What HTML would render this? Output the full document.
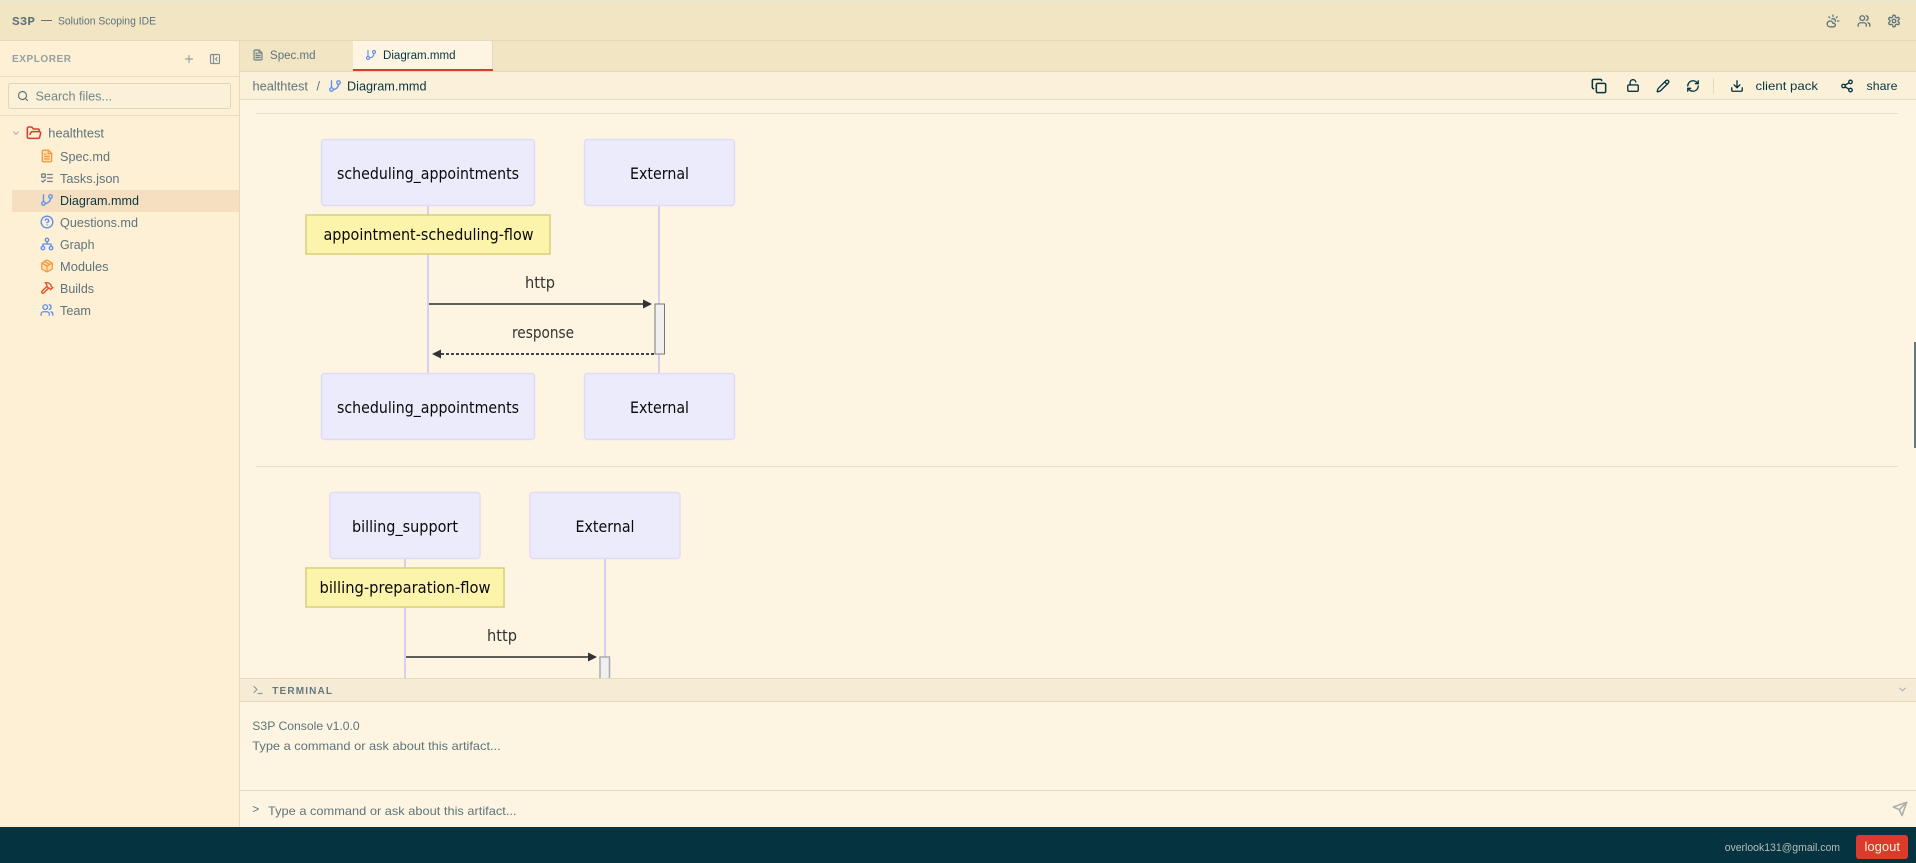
<!DOCTYPE html>
<html lang="en"><head><meta charset="utf-8"><title>S3P Solution Scoping IDE</title>
<style>
html,body{margin:0;padding:0;width:1916px;height:863px;overflow:hidden;background:#fdf5e2}
svg{display:block}
.i{font-family:"Liberation Sans",sans-serif}
.m{font-family:"DejaVu Sans",sans-serif;font-size:16px;fill:#0a0a0a;text-anchor:middle}
.ic{fill:none;stroke:currentColor;stroke-width:2.3;stroke-linecap:round;stroke-linejoin:round}
.t{font-size:12.5px;fill:#5f747a}
</style></head><body>
<svg width="1916" height="863" viewBox="0 0 1916 863" xmlns="http://www.w3.org/2000/svg">
<defs>
<symbol id="file" viewBox="0 0 24 24"><g class="ic"><path d="M14.5 2H6a2 2 0 0 0-2 2v16a2 2 0 0 0 2 2h12a2 2 0 0 0 2-2V7.5L14.5 2z" fill-opacity=".18" style="fill:currentColor"/><path d="M14 2v6h6M16 13H8M16 17H8M10 9H8"/></g></symbol>
<symbol id="todo" viewBox="0 0 24 24"><g class="ic"><rect x="3" y="5" width="6" height="6" rx="1"/><path d="m3 17 2 2 4-4M13 6h8M13 12h8M13 18h8"/></g></symbol>
<symbol id="branch" viewBox="0 0 24 24"><g class="ic"><path d="M6 3v12"/><circle cx="18" cy="6" r="3"/><circle cx="6" cy="18" r="3"/><path d="M18 9a9 9 0 0 1-9 9"/></g></symbol>
<symbol id="help" viewBox="0 0 24 24"><g class="ic"><circle cx="12" cy="12" r="10"/><path d="M9.09 9a3 3 0 0 1 5.83 1c0 2-3 3-3 3M12 17h.01"/></g></symbol>
<symbol id="graph" viewBox="0 0 24 24"><g class="ic"><circle cx="12" cy="5" r="3"/><circle cx="5" cy="19" r="3"/><circle cx="19" cy="19" r="3"/><path d="M5 16v-3a1 1 0 0 1 1-1h12a1 1 0 0 1 1 1v3M12 12V8"/></g></symbol>
<symbol id="pkg" viewBox="0 0 24 24"><g class="ic"><path d="M16.5 9.4 7.5 4.21"/><path d="M21 16V8a2 2 0 0 0-1-1.73l-7-4a2 2 0 0 0-2 0l-7 4A2 2 0 0 0 3 8v8a2 2 0 0 0 1 1.73l7 4a2 2 0 0 0 2 0l7-4A2 2 0 0 0 21 16z" fill-opacity=".15" style="fill:currentColor"/><path d="M3.27 6.96 12 12.01l8.73-5.05M12 22.08V12"/></g></symbol>
<symbol id="hammer" viewBox="0 0 24 24"><g class="ic"><path d="m15 12-8.373 8.373a1 1 0 1 1-3-3L12 9"/><path d="m18 15 4-4"/><path d="m21.5 11.5-1.914-1.914A2 2 0 0 1 19 8.172V7l-2.26-2.26a6 6 0 0 0-4.202-1.756L9 2.96l.92.82A6.18 6.18 0 0 1 12 8.4V10l2 2h1.172a2 2 0 0 1 1.414.586L18.5 14.5"/></g></symbol>
<symbol id="users" viewBox="0 0 24 24"><g class="ic"><path d="M16 21v-2a4 4 0 0 0-4-4H6a4 4 0 0 0-4 4v2"/><circle cx="9" cy="7" r="4"/><path d="M22 21v-2a4 4 0 0 0-3-3.87M16 3.13a4 4 0 0 1 0 7.75"/></g></symbol>
<symbol id="folder" viewBox="0 0 24 24"><g class="ic"><path d="m6 14 1.5-2.9A2 2 0 0 1 9.24 10H20a2 2 0 0 1 1.94 2.5l-1.54 6a2 2 0 0 1-1.95 1.5H4a2 2 0 0 1-2-2V5a2 2 0 0 1 2-2h3.9a2 2 0 0 1 1.69.9l.81 1.2a2 2 0 0 0 1.67.9H18a2 2 0 0 1 2 2v2"/></g></symbol>
<symbol id="copy" viewBox="0 0 24 24"><g class="ic"><rect x="8" y="8" width="14" height="14" rx="2"/><path d="M4 16c-1.1 0-2-.9-2-2V4c0-1.1.9-2 2-2h10c1.1 0 2 .9 2 2"/></g></symbol>
<symbol id="lock" viewBox="0 0 24 24"><g class="ic"><rect x="3" y="11" width="18" height="11" rx="2"/><path d="M7 11V7a5 5 0 0 1 9.9-1"/></g></symbol>
<symbol id="pencil" viewBox="0 0 24 24"><g class="ic"><path d="M21.174 6.812a1 1 0 0 0-3.986-3.987L3.842 16.174a2 2 0 0 0-.5.83l-1.321 4.352a.5.5 0 0 0 .623.622l4.353-1.32a2 2 0 0 0 .83-.497z"/><path d="m15 5 4 4"/></g></symbol>
<symbol id="refresh" viewBox="0 0 24 24"><g class="ic"><path d="M3 12a9 9 0 0 1 9-9 9.75 9.75 0 0 1 6.74 2.74L21 8"/><path d="M21 3v5h-5"/><path d="M21 12a9 9 0 0 1-9 9 9.75 9.75 0 0 1-6.74-2.74L3 16"/><path d="M8 16H3v5"/></g></symbol>
<symbol id="down" viewBox="0 0 24 24"><g class="ic"><path d="M3 15v4a2 2 0 0 0 2 2h14a2 2 0 0 0 2-2v-4M7 10l5 5 5-5M12 15V3"/></g></symbol>
<symbol id="share" viewBox="0 0 24 24"><g class="ic"><circle cx="18" cy="5" r="3"/><circle cx="6" cy="12" r="3"/><circle cx="18" cy="19" r="3"/><path d="M8.59 13.51 15.42 17.49M15.41 6.51 8.59 10.49"/></g></symbol>
<symbol id="gear" viewBox="0 0 24 24"><g class="ic"><path d="M12.22 2h-.44a2 2 0 0 0-2 2v.18a2 2 0 0 1-1 1.73l-.43.25a2 2 0 0 1-2 0l-.15-.08a2 2 0 0 0-2.73.73l-.22.38a2 2 0 0 0 .73 2.73l.15.1a2 2 0 0 1 1 1.72v.51a2 2 0 0 1-1 1.74l-.15.09a2 2 0 0 0-.73 2.73l.22.38a2 2 0 0 0 2.73.73l.15-.08a2 2 0 0 1 2 0l.43.25a2 2 0 0 1 1 1.73V20a2 2 0 0 0 2 2h.44a2 2 0 0 0 2-2v-.18a2 2 0 0 1 1-1.73l.43-.25a2 2 0 0 1 2 0l.15.08a2 2 0 0 0 2.73-.73l.22-.39a2 2 0 0 0-.73-2.73l-.15-.08a2 2 0 0 1-1-1.74v-.5a2 2 0 0 1 1-1.74l.15-.09a2 2 0 0 0 .73-2.73l-.22-.38a2 2 0 0 0-2.73-.73l-.15.08a2 2 0 0 1-2 0l-.43-.25a2 2 0 0 1-1-1.73V4a2 2 0 0 0-2-2z"/><circle cx="12" cy="12" r="3"/></g></symbol>
<symbol id="cloud" viewBox="0 0 24 24"><g class="ic"><path d="M12 2v2M4.93 4.93l1.41 1.41M20 12h2M19.07 4.93l-1.41 1.41M15.947 12.65a4 4 0 0 0-5.925-4.128"/><path d="M13 22H7a5 5 0 1 1 4.9-6H13a3 3 0 0 1 0 6Z"/></g></symbol>
<symbol id="send" viewBox="0 0 24 24"><g class="ic"><path d="m22 2-7 20-4-9-9-4Z"/><path d="M22 2 11 13"/></g></symbol>
<symbol id="term" viewBox="0 0 24 24"><g class="ic"><path d="M4 17l6-6-6-6M12 19h8"/></g></symbol>
<symbol id="chev" viewBox="0 0 24 24"><g class="ic"><path d="m6 9 6 6 6-6"/></g></symbol>
<symbol id="plus" viewBox="0 0 24 24"><g class="ic"><path d="M5 12h14M12 5v14"/></g></symbol>
<symbol id="panel" viewBox="0 0 24 24"><g class="ic"><rect x="3" y="3" width="18" height="18" rx="2"/><path d="M9 3v18M16 15l-3-3 3-3"/></g></symbol>
<symbol id="search" viewBox="0 0 24 24"><g class="ic"><circle cx="11" cy="11" r="8"/><path d="m21 21-4.3-4.3"/></g></symbol>
<clipPath id="clip"><rect x="240" y="100" width="1676" height="578"/></clipPath>
</defs>

<!-- backgrounds -->
<rect width="1916" height="863" fill="#fdf5e2"/>
<rect width="1916" height="41" fill="#f1e5c4"/>
<rect width="1916" height="1" fill="#ece6d6"/>
<rect y="40" width="1916" height="1" fill="#e4dabc"/>
<rect y="41" width="240" height="786" fill="#fdf0d5"/>
<rect x="239" y="41" width="1" height="786" fill="#e4dabc"/>
<rect y="76" width="239" height="1" fill="#e6dcc0"/>
<rect y="115" width="239" height="1" fill="#e6dcc0"/>
<rect x="240" y="41" width="1676" height="30" fill="#f1e5c4"/>
<rect x="240" y="71" width="1676" height="1" fill="#e4dabc"/>
<rect x="240" y="72" width="1676" height="27" fill="#fbf1d9"/>
<rect x="240" y="99" width="1676" height="1" fill="#e6dcc0"/>

<!-- top bar -->
<text x="12" y="25" font-family="Liberation Mono, monospace" font-size="12" font-weight="700" fill="#5f747a" textLength="23" lengthAdjust="spacingAndGlyphs">S3P</text>
<rect x="41" y="20" width="11" height="1" fill="#5f747a"/>
<text class="i" x="58" y="24.500" font-size="11" fill="#5f747a" textLength="98" lengthAdjust="spacingAndGlyphs">Solution Scoping IDE</text>
<use href="#cloud" x="1826" y="14" width="14" height="14" color="#5f747a"/>
<use href="#users" x="1857" y="14" width="14" height="14" color="#5f747a"/>
<use href="#gear" x="1887" y="14" width="14" height="14" color="#5f747a"/>

<!-- explorer -->
<text class="i" x="12" y="62" font-size="10" font-weight="700" fill="#93a1a1" textLength="59" lengthAdjust="spacing">EXPLORER</text>
<use href="#plus" x="183" y="53" width="12" height="12" color="#93a1a1"/>
<use href="#panel" x="209" y="53" width="12" height="12" color="#7f9094"/>
<rect x="8.500" y="83.500" width="222" height="25" rx="2" fill="#fbf1d9" stroke="#e0d6b8"/>
<use href="#search" x="17" y="90" width="12" height="12" color="#5f747a"/>
<text class="i" x="35.500" y="100.500" font-size="12.500" fill="#74868a" textLength="76.500" lengthAdjust="spacingAndGlyphs">Search files...</text>

<use href="#chev" x="11" y="128" width="10" height="10" color="#a2aca8"/>
<use href="#folder" x="26" y="125" width="16" height="16" color="#dc3a2a"/>
<text class="i t" x="48.300" y="137.500" textLength="55.700" lengthAdjust="spacingAndGlyphs">healthtest</text>

<rect x="12" y="190" width="227" height="22" fill="#f5dfc0"/>
<use href="#file" x="40" y="149" width="14" height="14" color="#f89a3c"/>
<text class="i t" x="60" y="161" textLength="50" lengthAdjust="spacingAndGlyphs">Spec.md</text>
<use href="#todo" x="40" y="171" width="14" height="14" color="#6f8186"/>
<text class="i t" x="60" y="183" textLength="59.500" lengthAdjust="spacingAndGlyphs">Tasks.json</text>
<use href="#branch" x="40" y="193" width="14" height="14" color="#5f8ff0"/>
<text class="i t" x="60" y="205" textLength="79" lengthAdjust="spacingAndGlyphs" style="fill:#073642">Diagram.mmd</text>
<use href="#help" x="40" y="215" width="14" height="14" color="#5f8ff0"/>
<text class="i t" x="60" y="227" textLength="78" lengthAdjust="spacingAndGlyphs">Questions.md</text>
<use href="#graph" x="40" y="237" width="14" height="14" color="#5f8ff0"/>
<text class="i t" x="60" y="249" textLength="34.500" lengthAdjust="spacingAndGlyphs">Graph</text>
<use href="#pkg" x="40" y="259" width="14" height="14" color="#f89a3c"/>
<text class="i t" x="60" y="271" textLength="48.500" lengthAdjust="spacingAndGlyphs">Modules</text>
<use href="#hammer" x="40" y="281" width="14" height="14" color="#e8501f"/>
<text class="i t" x="60" y="293" textLength="34" lengthAdjust="spacingAndGlyphs">Builds</text>
<use href="#users" x="40" y="303" width="14" height="14" color="#5f8ff0"/>
<text class="i t" x="60" y="315" textLength="31" lengthAdjust="spacingAndGlyphs">Team</text>

<!-- tabs -->
<use href="#file" x="252" y="49" width="12" height="12" color="#74868a"/>
<text class="i" x="270" y="59" font-size="11.500" fill="#5f747a" textLength="45.500" lengthAdjust="spacingAndGlyphs">Spec.md</text>
<rect x="353" y="41" width="139" height="30" fill="#fdf5e2"/>
<rect x="492" y="41" width="1" height="30" fill="#e4dabc"/>
<rect x="353" y="69" width="140" height="2" fill="#dc3a2a"/>
<use href="#branch" x="365" y="49" width="12" height="12" color="#5f8ff0"/>
<text class="i" x="383" y="59" font-size="11.500" fill="#073642" textLength="72.500" lengthAdjust="spacingAndGlyphs">Diagram.mmd</text>

<!-- breadcrumb -->
<text class="i" x="252.500" y="90.500" font-size="12.500" fill="#5f747a" textLength="55.500" lengthAdjust="spacingAndGlyphs">healthtest</text>
<text class="i" x="316.500" y="90.500" font-size="12.500" fill="#5f747a">/</text>
<use href="#branch" x="328" y="79" width="14" height="14" color="#5f8ff0"/>
<text class="i" x="347" y="90.500" font-size="12.500" fill="#073642" textLength="79.500" lengthAdjust="spacingAndGlyphs">Diagram.mmd</text>
<use href="#copy" x="1591" y="78" width="16" height="16" color="#073642"/>
<use href="#lock" x="1626" y="78" width="14" height="15" color="#073642"/>
<use href="#pencil" x="1656" y="79" width="14" height="14" color="#073642"/>
<use href="#refresh" x="1686" y="79" width="14" height="14" color="#073642"/>
<rect x="1713" y="78" width="1" height="16" fill="#e4dabc"/>
<use href="#down" x="1730" y="79" width="14" height="14" color="#073642"/>
<text class="i" x="1755.500" y="90" font-size="12" fill="#073642" textLength="62.500" lengthAdjust="spacingAndGlyphs">client pack</text>
<use href="#share" x="1840" y="79" width="14" height="14" color="#073642"/>
<text class="i" x="1866.500" y="90" font-size="12" fill="#073642" textLength="31" lengthAdjust="spacingAndGlyphs">share</text>

<!-- content -->
<g clip-path="url(#clip)">
<rect x="256" y="113" width="1642" height="1" fill="#e8dfc6"/>
<rect x="256" y="466" width="1642" height="1" fill="#e8dfc6"/>

<!-- diagram 1 -->
<rect x="427" y="205" width="2" height="168" fill="#d6cff0"/>
<rect x="658" y="205" width="2" height="168" fill="#d6cff0"/>
<g stroke="#e1dcf5" stroke-width="1.500" fill="#ebebfc">
<rect x="321.500" y="139.500" width="213" height="66" rx="3"/>
<rect x="584.500" y="139.500" width="150" height="66" rx="3"/>
<rect x="321.500" y="373.500" width="213" height="66" rx="3"/>
<rect x="584.500" y="373.500" width="150" height="66" rx="3"/>
</g>
<rect x="306" y="215" width="244" height="39" fill="#fdf4ac" stroke="#d8cf7c" stroke-width="1.500"/>
<text class="m" x="428" y="179" textLength="182" lengthAdjust="spacingAndGlyphs">scheduling_appointments</text>
<text class="m" x="659.500" y="179" textLength="59" lengthAdjust="spacingAndGlyphs">External</text>
<text class="m" x="428" y="413" textLength="182" lengthAdjust="spacingAndGlyphs">scheduling_appointments</text>
<text class="m" x="659.500" y="413" textLength="59" lengthAdjust="spacingAndGlyphs">External</text>
<text class="m" x="428.500" y="240" textLength="210" lengthAdjust="spacingAndGlyphs">appointment-scheduling-flow</text>
<text class="m" x="540" y="288" style="fill:#333" textLength="30" lengthAdjust="spacingAndGlyphs">http</text>
<text class="m" x="543" y="338" style="fill:#333" textLength="62" lengthAdjust="spacingAndGlyphs">response</text>
<rect x="655" y="304" width="9.500" height="50" fill="#f0f0f0" stroke="#777" stroke-width="1"/>
<rect x="429" y="303" width="216" height="2" fill="#5e5e58"/>
<path d="M643 299.500v9l9-4.500z" fill="#333"/>
<line x1="654" y1="354" x2="438" y2="354" stroke="#444" stroke-width="2" stroke-dasharray="3 2"/>
<path d="M441 349.500v9l-9-4.500z" fill="#333"/>

<!-- diagram 2 -->
<rect x="404" y="558" width="2" height="120" fill="#d6cff0"/>
<rect x="604" y="558" width="2" height="120" fill="#d6cff0"/>
<g stroke="#e1dcf5" stroke-width="1.500" fill="#ebebfc">
<rect x="330" y="492.500" width="150" height="66" rx="3"/>
<rect x="530" y="492.500" width="150" height="66" rx="3"/>
</g>
<rect x="306" y="568" width="198" height="39" fill="#fdf4ac" stroke="#d8cf7c" stroke-width="1.500"/>
<text class="m" x="405" y="532" textLength="106" lengthAdjust="spacingAndGlyphs">billing_support</text>
<text class="m" x="605" y="532" textLength="59" lengthAdjust="spacingAndGlyphs">External</text>
<text class="m" x="405" y="593" textLength="171" lengthAdjust="spacingAndGlyphs">billing-preparation-flow</text>
<text class="m" x="502" y="641" style="fill:#333" textLength="30" lengthAdjust="spacingAndGlyphs">http</text>
<rect x="600" y="657" width="9.500" height="30" fill="#f0f0f0" stroke="#aaa" stroke-width="1.500"/>
<rect x="406" y="656" width="184" height="2" fill="#5e5e58"/>
<path d="M588 652.500v9l9-4.500z" fill="#333"/>
</g>

<!-- scrollbar -->
<rect x="1914" y="342" width="2" height="106" fill="#5f7a80"/>

<!-- terminal -->
<rect x="240" y="678" width="1676" height="24" fill="#f6ecd6"/>
<rect x="240" y="678" width="1676" height="1" fill="#e4dabc"/>
<rect x="240" y="701" width="1676" height="1" fill="#e4dabc"/>
<rect x="240" y="702" width="1676" height="125" fill="#fdf5e2"/>
<rect x="240" y="790" width="1676" height="1" fill="#e4dabc"/>
<use href="#term" x="252" y="684" width="12" height="12" color="#8b9a9b"/>
<text class="i" x="272.300" y="694" font-size="10" font-weight="700" fill="#64787e" textLength="59.700" lengthAdjust="spacing">TERMINAL</text>
<use href="#chev" x="1897" y="684" width="11" height="11" color="#a9b0aa"/>
<text class="i" x="252.300" y="730" font-size="12" fill="#5f747a" textLength="107.400" lengthAdjust="spacingAndGlyphs">S3P Console v1.0.0</text>
<text class="i" x="252.300" y="750" font-size="12" fill="#5f747a" textLength="248.400" lengthAdjust="spacingAndGlyphs">Type a command or ask about this artifact...</text>
<text class="i" x="252.300" y="813" font-size="12" fill="#5f747a">&gt;</text>
<text class="i" x="268" y="815" font-size="12" fill="#5f747a" textLength="248.500" lengthAdjust="spacingAndGlyphs">Type a command or ask about this artifact...</text>
<use href="#send" x="1892" y="801" width="16" height="16" color="#a9b0aa"/>

<!-- footer -->
<rect y="827" width="1916" height="36" fill="#053440"/>
<text class="i" x="1724.700" y="851" font-size="11" fill="#b4bdb8" textLength="115.300" lengthAdjust="spacingAndGlyphs">overlook131@gmail.com</text>
<rect x="1856" y="835" width="52" height="24" rx="3" fill="#dc3a2a"/>
<text class="i" x="1864.500" y="851" font-size="12.500" fill="#fdf0d5" textLength="35.500" lengthAdjust="spacingAndGlyphs">logout</text>
</svg>
</body></html>
